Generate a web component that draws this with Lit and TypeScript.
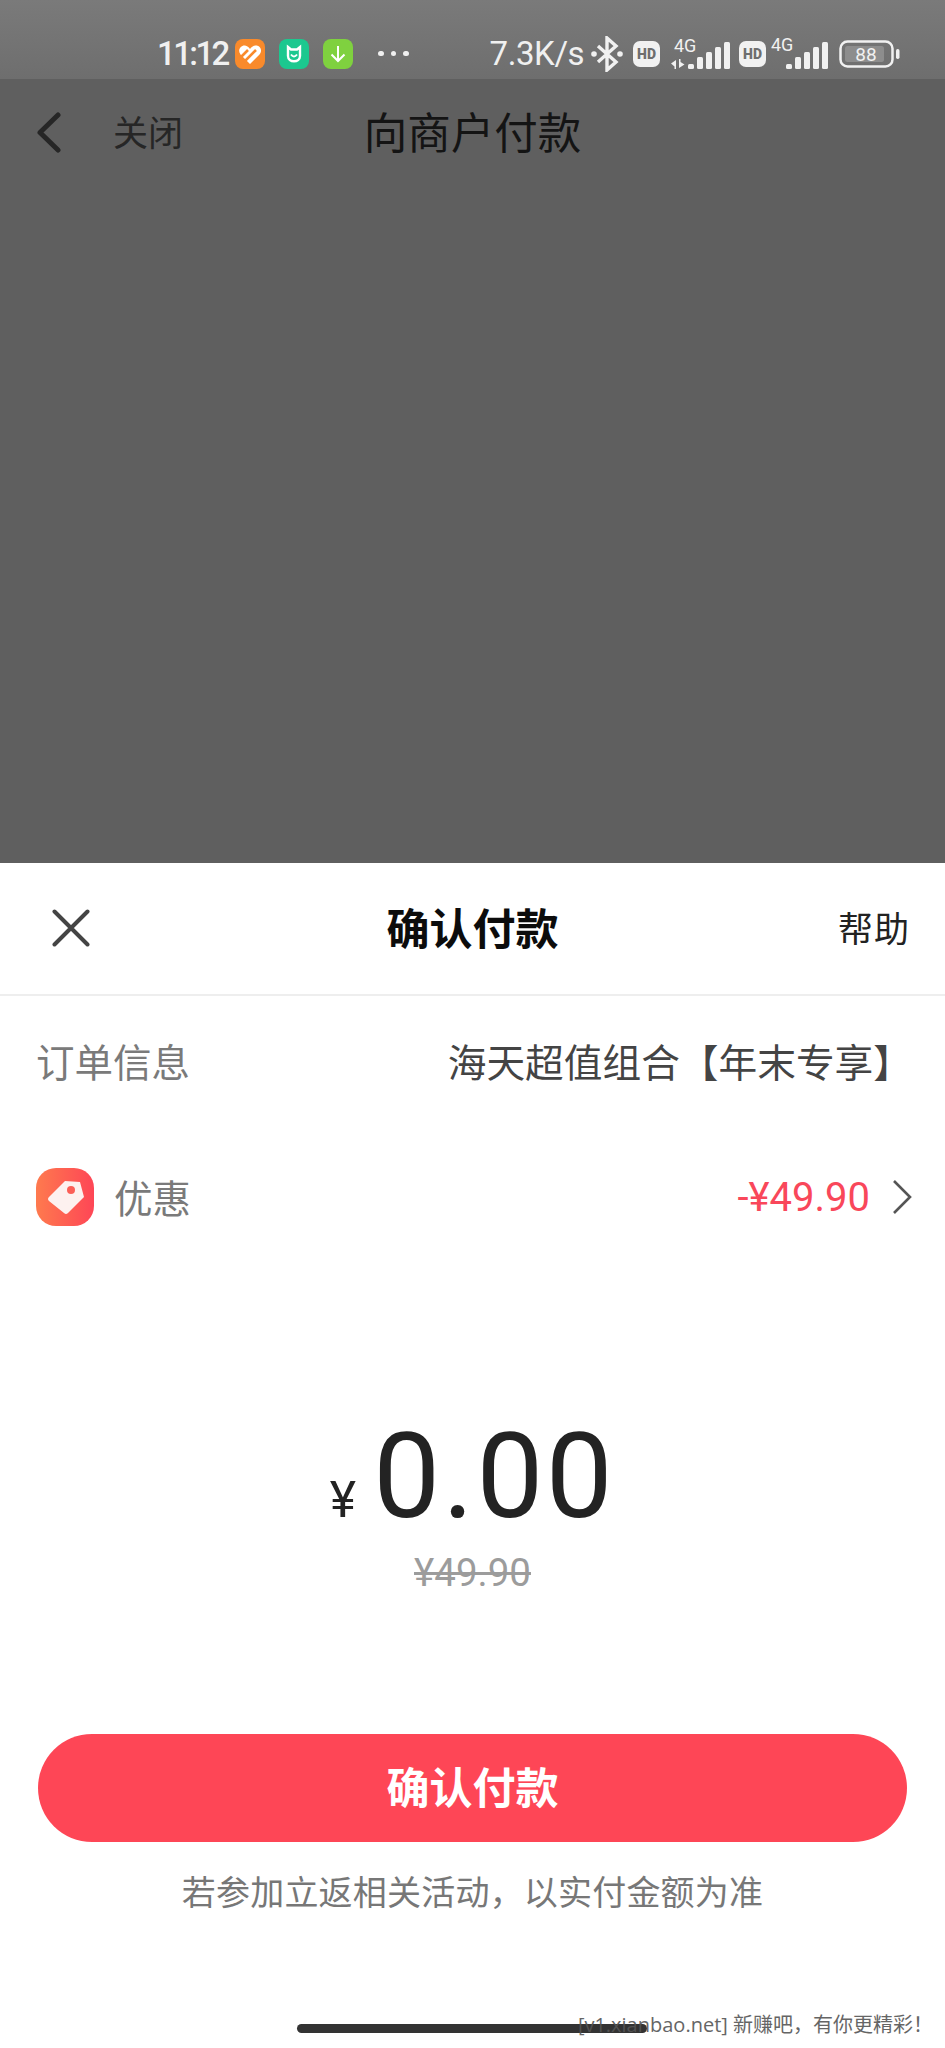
import { LitElement, html, css, svg } from "lit";
import { customElement } from "lit/decorators.js";

const hd = html`<svg class="hd" width="27" height="26" viewBox="0 0 27 26"><rect width="27" height="26" rx="7" fill="#f1f1f1"/><text x="13.5" y="18" text-anchor="middle" font-family="Roboto" font-weight="900" font-size="14" fill="#6e6e6e">HD</text></svg>`;

function bars(x0: number, hs: number[]) {
  return hs.map((h, i) => svg`<rect x="${x0 + i * 9}" y="${30 - h}" width="6" height="${h}" rx="1.5" fill="#f1f1f1"/>`);
}

const NOTE = "若参加立返相关活动\uFF0C以实付金额为准";
const MARK = "[v1.xianbao.net] 新赚吧\uFF0C有你更精彩\uFF01";

@customElement("app-root")
export class AppRoot extends LitElement {
  static styles = css`
    :host { display: block; width: 945px; height: 2048px; font-family: Roboto, "Noto Sans CJK SC", sans-serif; position: relative; overflow: hidden; background: #fff; }
    .page { display: flex; flex-direction: column; height: 2048px; }
    .status { height: 79px; flex: none; background: linear-gradient(#7a7a7a, #6e6e6e); display: flex; align-items: center; padding: 28px 0 0 157px; box-sizing: border-box; color: #f0f0f0; }
    .time { font-size: 33px; font-weight: 500; width: 78px; letter-spacing: -2.6px; white-space: nowrap; }
    .apps { display: flex; gap: 14px; }
    .dots { display: flex; gap: 7px; margin-left: 25px; }
    .dots i { width: 5.5px; height: 5.5px; border-radius: 50%; background: #f0f0f0; }
    .speed { font-size: 33px; margin-left: 81px; width: 101px; white-space: nowrap; letter-spacing: -0.4px; }
    .rstat { display: flex; align-items: center; }
    .hd { margin-left: 10px; }
    .sig { margin-left: 11px; }
    .sig + .hd { margin-left: 10px; }
    .sig2 { margin-left: 5px; }
    .batt { margin-left: 12px; }
    .dim { flex: none; height: 784px; background: #5f5f5f; box-sizing: border-box; }
    .nav { height: 106px; display: grid; grid-template-columns: 1fr auto 1fr; align-items: center; padding: 0 36px; }
    .nav-left { display: flex; align-items: center; gap: 52px; }
    .close-text { font-size: 35px; color: #262626; margin-bottom: 4px; }
    .nav-title { font-size: 43.5px; color: #141414; margin-bottom: 4px; }
    .sheet { flex: 1; background: #fff; display: flex; flex-direction: column; }
    .head { height: 133px; flex: none; border-bottom: 2px solid #eee; display: grid; grid-template-columns: 1fr auto 1fr; align-items: center; padding: 0 35px 5px 35px; box-sizing: border-box; }
    .head-title { font-size: 43px; font-weight: 700; color: #0c0c0c; }
    .help { justify-self: end; font-size: 35px; color: #222; letter-spacing: 1px; }
    .x { display: block; margin: 4px 0 0 17px; }
    .row { display: flex; align-items: center; justify-content: space-between; padding: 0 36px; }
    .order { height: 133px; box-sizing: border-box; padding-bottom: 6px; }
    .label { font-size: 38.5px; color: #7a7a7a; }
    .promo .label { margin-bottom: 3px; }
    .goods { font-size: 38.7px; color: #444; margin-right: -3px; white-space: nowrap; }
    .promo { height: 136px; padding-right: 33px; }
    .promo-left { display: flex; align-items: center; gap: 20px; }
    .promo-right { display: flex; align-items: center; gap: 22px; }
    .off { font-size: 40px; color: #f9475a; }
    .amount { margin-top: 142px; display: flex; justify-content: center; align-items: baseline; color: #232323; line-height: 140px; height: 140px; padding-right: 0; }
    .cur { font-size: 50px; margin-right: 17px; }
    .num { font-size: 119px; font-weight: 400; letter-spacing: 2.5px; }
    .old { text-align: center; font-size: 38.5px; color: #9c9c9c; text-decoration: line-through; line-height: 54px; margin-top: -1px; }
    .pay { margin: 134px 38px 0; height: 108px; padding: 0 0 6px; box-sizing: border-box; border: none; border-radius: 54px; background: #fe4656; color: #fff; font: 700 43px Roboto, "Noto Sans CJK SC", sans-serif; display: flex; align-items: center; justify-content: center; }
    .note { text-align: center; font-size: 34px; color: #777; margin-top: 27px; line-height: 48px; letter-spacing: 0.2px; }
    .home { position: absolute; left: 297px; top: 2024px; width: 350px; height: 9px; border-radius: 5px; background: #333; }
    .wm { position: absolute; right: 12px; top: 2011px; font-size: 20px; line-height: 28px; color: #555; white-space: nowrap; font-family: "Open Sans", "Noto Sans CJK SC", sans-serif; opacity: .9; }
  `;

  render() {
    return html`<div class="page">
      <div class="status">
        <span class="time">11:12</span>
        <div class="apps">
          <svg width="30" height="30" viewBox="0 0 30 30"><rect width="30" height="30" rx="8" fill="#f98a2b"/><path d="M15 25 L5.5 15.5 C2 11 6 6 10 6.5 C12 6.8 14 8.5 15 10 C16 8.5 18 6.5 21 6.5 C25 6.5 28 11 24.5 15.5 Z" fill="#fff"/><path d="M5 19 L13 11 M9 23 L21 11" stroke="#f98a2b" stroke-width="2.6" fill="none"/></svg>
          <svg width="30" height="30" viewBox="0 0 30 30"><rect width="30" height="30" rx="8" fill="#1cc88f"/><path d="M9 8 L12 10.5 H18 L21 8 V17 C21 24 9 24 9 17 Z" fill="none" stroke="#fff" stroke-width="2.4"/><path d="M12 15.5 Q15 19.5 18 15.5" fill="none" stroke="#fff" stroke-width="2"/></svg>
          <svg width="30" height="30" viewBox="0 0 30 30"><rect width="30" height="30" rx="8" fill="#7fd13f"/><path d="M15 7 V22 M8.5 15.5 L15 22 L21.5 15.5" fill="none" stroke="#fff" stroke-width="2"/></svg>
        </div>
        <div class="dots"><i></i><i></i><i></i></div>
        <span class="speed">7.3K/s</span>
        <div class="rstat">
          <svg width="32" height="36" viewBox="0 0 32 36"><path d="M7 10 L25 26 L16 34 V2 L25 10 L7 26" fill="none" stroke="#f1f1f1" stroke-width="3.4"/><circle cx="3" cy="18" r="2.8" fill="#f1f1f1"/><circle cx="29" cy="18" r="2.8" fill="#f1f1f1"/></svg>
          ${hd}
          <svg class="sig" width="58" height="30" viewBox="0 0 58 30" style="overflow:visible"><text x="3" y="12.5" font-family="Roboto" font-size="18" fill="#f1f1f1">4G</text><path d="M0 24.5 L5 21 V30 H3.5 V27.5 Z M8 20 H9.5 V23 L13.5 25.5 L8 29 Z" fill="#f1f1f1"/>${bars(17, [5, 12, 17, 22, 27])}</svg>
          ${hd}
          <svg class="sig2" width="56" height="30" viewBox="0 0 56 30" style="overflow:visible"><text x="0" y="12" font-family="Roboto" font-size="18" fill="#f1f1f1">4G</text>${bars(15, [5, 12, 17, 22, 27])}</svg>
          <svg class="batt" width="62" height="28" viewBox="0 0 62 28"><rect x="1.5" y="1.5" width="52" height="25" rx="7" fill="none" stroke="#f1f1f1" stroke-width="2.5"/><rect x="6" y="6" width="39" height="16" rx="2.5" fill="#8d8d8d"/><rect x="57" y="9" width="3.5" height="10" rx="1.7" fill="#f1f1f1"/><text x="27" y="21" text-anchor="middle" font-family="Roboto" font-size="19" fill="#f1f1f1">88</text></svg>
        </div>
      </div>
      <div class="dim">
        <div class="nav">
          <div class="nav-left">
            <svg width="25" height="41" viewBox="0 0 25 41"><path d="M22 3 L4 20.5 L22 38" fill="none" stroke="#262626" stroke-width="5" stroke-linecap="round" stroke-linejoin="round"/></svg>
            <span class="close-text">关闭</span>
          </div>
          <span class="nav-title">向商户付款</span>
          <span></span>
        </div>
      </div>
      <div class="sheet">
        <div class="head">
          <svg class="x" width="38" height="38" viewBox="0 0 38 38"><path d="M2.5 2.5 L35.5 35.5 M35.5 2.5 L2.5 35.5" stroke="#444" stroke-width="4" stroke-linecap="round"/></svg>
          <span class="head-title">确认付款</span>
          <span class="help">帮助</span>
        </div>
        <div class="row order"><span class="label">订单信息</span><span class="goods">海天超值组合【年末专享】</span></div>
        <div class="row promo">
          <div class="promo-left">
            <svg width="58" height="58" viewBox="0 0 58 58"><defs><linearGradient id="tag" x1="0" x2="1"><stop offset="0" stop-color="#fe7a4e"/><stop offset="1" stop-color="#fe4656"/></linearGradient></defs><rect width="58" height="58" rx="20" fill="url(#tag)"/><path d="M29 13 L44 14 L48 29 L32 45 Q30 47 28 45 L13 33 Q11 31 13 29 Z" fill="#fdf1ef"/><circle cx="35" cy="22" r="4" fill="#fb5f57"/></svg>
            <span class="label">优惠</span>
          </div>
          <div class="promo-right">
            <span class="off">-¥49.90</span>
            <svg width="20" height="36" viewBox="0 0 20 36"><path d="M2 2 L18 18 L2 34" fill="none" stroke="#555" stroke-width="2.6"/></svg>
          </div>
        </div>
        <div class="amount"><span class="cur">¥</span><span class="num">0.00</span></div>
        <div class="old">¥49.90</div>
        <button class="pay">确认付款</button>
        <div class="note">${NOTE}</div>
      </div>
    </div>
    <div class="home"></div>
    <div class="wm">${MARK}</div>`;
  }
}
